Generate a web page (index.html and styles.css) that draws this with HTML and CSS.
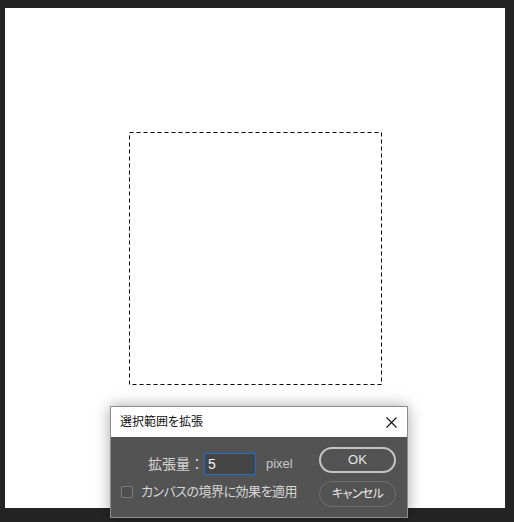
FILE: index.html
```html
<!DOCTYPE html>
<html lang="ja">
<head>
<meta charset="utf-8">
<title>選択範囲を拡張</title>
<link rel="stylesheet" href="styles.css">
</head>
<body>
<div class="workspace">
  <div class="canvas">
    <svg class="marquee" width="253" height="253" viewBox="0 0 253 253">
      <rect x="0.5" y="0.5" width="252" height="252" fill="none" stroke="#000" stroke-width="1" stroke-dasharray="4 3"/>
    </svg>
  </div>
  <div class="dialog">
    <div class="titlebar">
      <span class="title">選択範囲を拡張</span>
      <svg class="close" width="11" height="11" viewBox="0 0 11 11">
        <path d="M0.5 0.5 L10.5 10.5 M10.5 0.5 L0.5 10.5" stroke="#111" stroke-width="1.1" fill="none"/>
      </svg>
    </div>
    <div class="dialog-body">
      <div class="fields">
        <div class="amount-row">
          <span class="label">拡張量：</span>
          <span class="input">5</span>
          <span class="unit">pixel</span>
        </div>
        <div class="check-row">
          <span class="checkbox"></span>
          <span class="check-label">カンバスの境界に効果を適用</span>
        </div>
      </div>
      <div class="buttons">
        <span class="btn btn-ok">OK</span>
        <span class="btn btn-cancel">キャンセル</span>
      </div>
    </div>
  </div>
</div>
</body>
</html>
```
FILE: styles.css
```css
html, body {
  margin: 0;
  padding: 0;
  background: #242424;
}
body {
  width: 514px;
  height: 522px;
  overflow: hidden;
  font-family: "Liberation Sans", "Noto Sans CJK JP", sans-serif;
  font-feature-settings: "palt";
}
.workspace {
  position: relative;
  width: 514px;
  height: 522px;
  padding: 8px 0 0 5px;
  box-sizing: border-box;
}
.canvas {
  position: relative;
  width: 500px;
  height: 500px;
  background: #ffffff;
}
.marquee {
  position: absolute;
  left: 124px;
  top: 124px;
  display: block;
}
.dialog {
  position: absolute;
  left: 110px;
  top: 406px;
  width: 298px;
  height: 112px;
  box-sizing: border-box;
  border: 1px solid #8c8c8c;
  background: #535353;
  box-shadow: 0 0 14px rgba(0, 0, 0, 0.35);
  display: flex;
  flex-direction: column;
}
.titlebar {
  height: 30px;
  background: #ffffff;
  display: flex;
  align-items: center;
  justify-content: space-between;
  padding: 0 10px 0 9px;
}
.title {
  font-size: 12px;
  color: #111;
  line-height: 16px;
}
.close {
  display: block;
}
.dialog-body {
  flex: 1;
  display: flex;
  padding: 10px 11px 0 10px;
}
.fields {
  flex: 1;
  display: flex;
  flex-direction: column;
}
.amount-row {
  display: flex;
  align-items: center;
  margin-top: 6px;
  height: 22px;
  padding-left: 27px;
}
.label {
  font-size: 14px;
  color: #d4d4d4;
  line-height: 18px;
  font-feature-settings: normal;
}
.input {
  box-sizing: border-box;
  width: 52px;
  height: 22px;
  background: #454545;
  border: 1px solid #1f6fd6;
  color: #f2f2f2;
  font-size: 14px;
  line-height: 20px;
  padding-left: 3px;
}
.unit {
  margin-left: 10px;
  font-size: 13px;
  color: #c8c8c8;
  line-height: 16px;
}
.check-row {
  display: flex;
  align-items: center;
  margin-top: 10px;
  height: 14px;
}
.checkbox {
  box-sizing: border-box;
  width: 12px;
  height: 12px;
  border: 1px solid #7a7a7a;
  border-radius: 2px;
  background: #4e4e4e;
}
.check-label {
  margin-left: 8px;
  font-size: 13px;
  letter-spacing: -0.5px;
  color: #d6d6d6;
  line-height: 18px;
}
.buttons {
  width: 77px;
  display: flex;
  flex-direction: column;
  gap: 8px;
}
.btn {
  box-sizing: border-box;
  height: 26px;
  border-radius: 13px;
  display: flex;
  align-items: center;
  justify-content: center;
  font-size: 13px;
  line-height: 16px;
  color: #e8e8e8;
}
.btn-ok {
  border: 2px solid #c4c4c4;
}
.btn-cancel {
  border: 1.5px solid #6e6e6e;
  font-size: 12px;
  letter-spacing: -0.6px;
}
```
